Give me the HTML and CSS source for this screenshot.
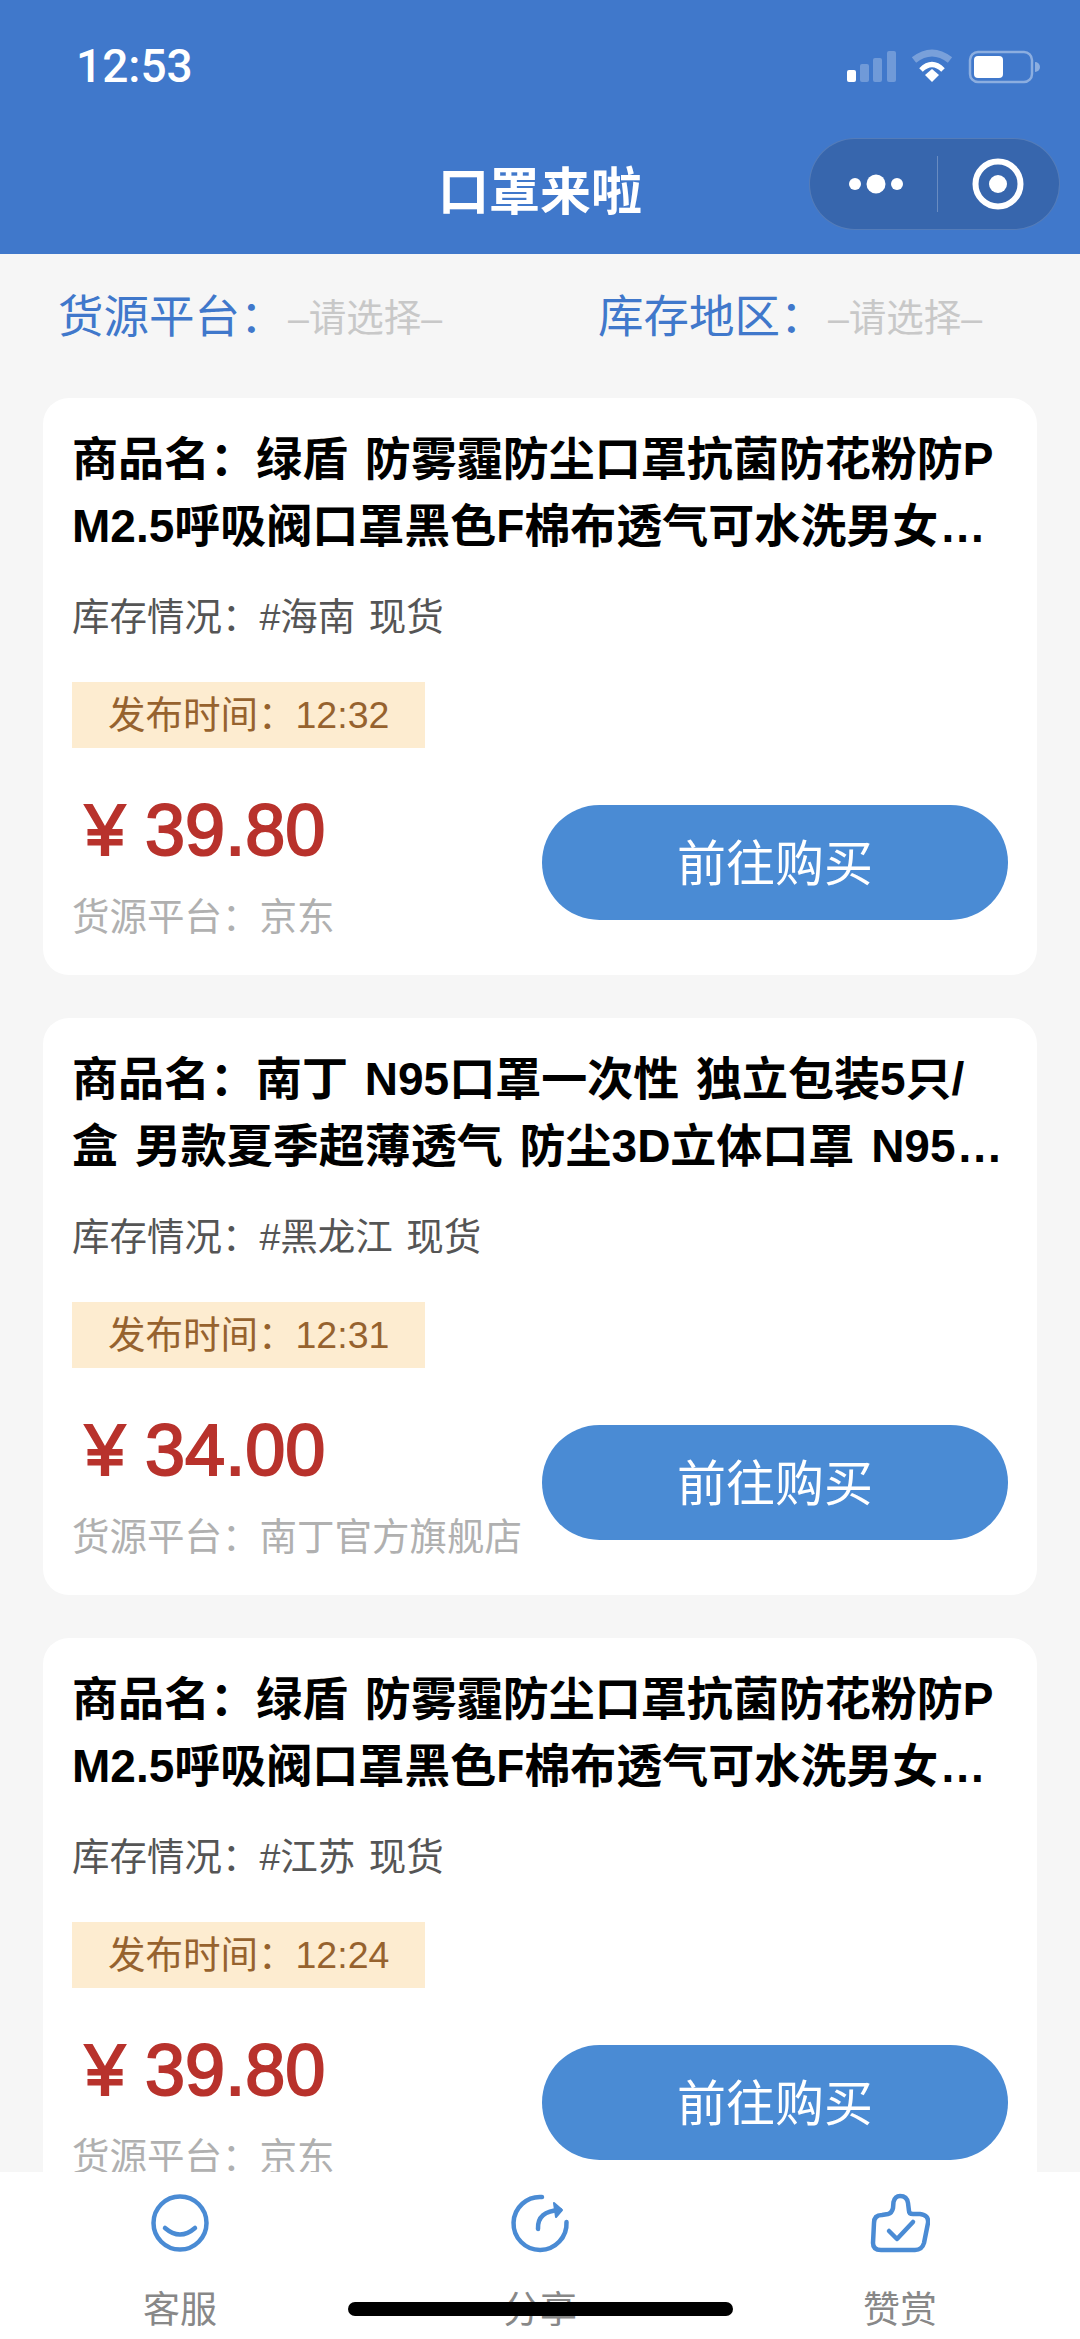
FILE: index.html
```html
<!DOCTYPE html>
<html lang="zh-CN">
<head>
    <meta charset="UTF-8">
    <meta name="viewport" content="width=device-width, initial-scale=1.0">
    <title>口罩来啦</title>
    <link rel="stylesheet" href="styles.css">
</head>
<body>
    <div class="page">
        <header class="header">
            <div class="status-bar">
                <span class="time">12:53</span>
                <svg class="status-icons" width="196" height="36" viewBox="0 0 196 36">
                    <rect x="1" y="22" width="9" height="12" rx="2" fill="#fff"/>
                    <rect x="14" y="16" width="9" height="18" rx="2" fill="#fff" opacity=".25"/>
                    <rect x="27" y="10" width="9" height="24" rx="2" fill="#fff" opacity=".25"/>
                    <rect x="41" y="3" width="9" height="31" rx="2" fill="#fff" opacity=".25"/>
                    <path d="M68 12 Q86 -2 104 12" fill="none" stroke="#fff" stroke-width="7" opacity=".3"/>
                    <path d="M75 22 Q86 11 97 22" fill="none" stroke="#fff" stroke-width="5"/>
                    <path d="M79 27 L86 21 L93 27 L86 34 Z" fill="#fff"/>
                    <rect x="124" y="4" width="62" height="30" rx="8" fill="none" stroke="#fff" stroke-width="2.5" opacity=".4"/>
                    <rect x="128" y="8" width="29" height="22" rx="4" fill="#fff"/>
                    <path d="M189 14 A5 5 0 0 1 189 24 Z" fill="#fff" opacity=".4"/>
                </svg>
            </div>
            <div class="nav-bar">
                <h1 class="nav-title">口罩来啦</h1>
                <div class="capsule">
                    <div class="capsule-btn capsule-more">
                        <svg width="56" height="24" viewBox="0 0 56 24">
                            <circle cx="7" cy="12" r="6" fill="#fff"/>
                            <circle cx="28" cy="12" r="9.5" fill="#fff"/>
                            <circle cx="49" cy="12" r="6" fill="#fff"/>
                        </svg>
                    </div>
                    <div class="capsule-line"></div>
                    <div class="capsule-btn">
                        <svg width="52" height="52" viewBox="0 0 52 52">
                            <circle cx="26" cy="26" r="22.5" fill="none" stroke="#fff" stroke-width="6"/>
                            <circle cx="26" cy="26" r="9" fill="#fff"/>
                        </svg>
                    </div>
                </div>
            </div>
        </header>

        <div class="filters">
            <div class="filter filter-left">
                <span class="filter-label">货源平台：</span>
                <span class="filter-value">–请选择–</span>
            </div>
            <div class="filter">
                <span class="filter-label">库存地区：</span>
                <span class="filter-value">–请选择–</span>
            </div>
        </div>

        <div class="list">
            <div class="card">
                <div class="card-title">商品名：绿盾 防雾霾防尘口罩抗菌防花粉防PM2.5呼吸阀口罩黑色F棉布透气可水洗男女<span class="dots">...</span></div>
                <div class="card-stock">库存情况：#海南 现货</div>
                <div class="card-tag">发布时间：12:32</div>
                <div class="card-bottom">
                    <div>
                        <div class="price">¥ 39.80</div>
                        <div class="source">货源平台：京东</div>
                    </div>
                    <button class="buy-btn">前往购买</button>
                </div>
            </div>

            <div class="card">
                <div class="card-title">商品名：南丁 N95口罩一次性 独立包装5只/盒 男款夏季超薄透气 防尘3D立体口罩 N95<span class="dots">...</span></div>
                <div class="card-stock">库存情况：#黑龙江 现货</div>
                <div class="card-tag">发布时间：12:31</div>
                <div class="card-bottom">
                    <div>
                        <div class="price">¥ 34.00</div>
                        <div class="source">货源平台：南丁官方旗舰店</div>
                    </div>
                    <button class="buy-btn">前往购买</button>
                </div>
            </div>

            <div class="card">
                <div class="card-title">商品名：绿盾 防雾霾防尘口罩抗菌防花粉防PM2.5呼吸阀口罩黑色F棉布透气可水洗男女<span class="dots">...</span></div>
                <div class="card-stock">库存情况：#江苏 现货</div>
                <div class="card-tag">发布时间：12:24</div>
                <div class="card-bottom">
                    <div>
                        <div class="price">¥ 39.80</div>
                        <div class="source">货源平台：京东</div>
                    </div>
                    <button class="buy-btn">前往购买</button>
                </div>
            </div>
        </div>

        <nav class="tabbar">
            <div class="tab">
                <svg class="tab-icon" viewBox="0 0 60 60">
                    <circle cx="30" cy="30" r="26.5"/>
                    <path d="M15 35 Q30 48 45 35"/>
                </svg>
                <span>客服</span>
            </div>
            <div class="tab">
                <svg class="tab-icon" viewBox="0 0 60 60">
                    <path d="M32 4 A26.5 26.5 0 1 0 56.5 29"/>
                    <path d="M28 36 Q27 18 50 17"/>
                    <path d="M44 10 L52 17 L46 24 Z" class="fill"/>
                </svg>
                <span>分享</span>
            </div>
            <div class="tab">
                <svg class="tab-icon" viewBox="0 0 60 60">
                    <path d="M11 57 Q3 57 3 50 L4 30 Q4 22 12 22 L18 21 Q22 20 23 15 L23.500 9 Q25 3 30 3 Q37 3 38 10 L39 18 Q39 21 43 21 L50 21 Q59 22 58 30 L54 50 Q52 57 45 57 Z"/>
                    <path d="M19 38 L27 46 L43 29"/>
                </svg>
                <span>赞赏</span>
            </div>
            <div class="home-bar"></div>
        </nav>
    </div>
</body>
</html>
```

FILE: styles.css
```css
body {
    margin: 0;
    font-family: "Liberation Sans", "Noto Sans CJK SC", sans-serif;
    background-color: #f6f6f6;
}
.page {
    height: 2339px;
    display: flex;
    flex-direction: column;
    overflow: hidden;
}

/* top blue part */
.header {
    height: 254px;
    background-color: #4078cb;
    color: white;
    flex-shrink: 0;
    box-sizing: border-box;
}
.status-bar {
    height: 132px;
    display: flex;
    justify-content: space-between;
    align-items: flex-start;
    padding: 48px 38px 0 76px;
    box-sizing: border-box;
}
.time {
    font-family: Roboto, sans-serif;
    font-size: 46px;
    font-weight: 500;
    line-height: 36px;
}
.status-icons {
    display: block;
}
.nav-bar {
    display: grid;
    grid-template-columns: 1fr auto 1fr;
    align-items: start;
    padding: 6px 20px 0;
}
.nav-title {
    grid-column: 2;
    margin: 0;
    padding-top: 9px;
    font-size: 51px;
    font-weight: 700;
    line-height: 92px;
}
.capsule {
    grid-column: 3;
    justify-self: end;
    width: 251px;
    height: 92px;
    box-sizing: border-box;
    display: flex;
    align-items: center;
    background-color: #3766ad;
    border: 1px solid rgba(255, 255, 255, 0.15);
    border-radius: 46px;
}
.capsule-btn {
    flex: 1;
    display: flex;
    justify-content: center;
    align-items: center;
}
.capsule-more {
    padding-left: 5px;
}
.capsule-btn svg {
    display: block;
}
.capsule-line {
    width: 1px;
    height: 56px;
    background-color: rgba(255, 255, 255, 0.25);
}

/* filters */
.filters {
    height: 144px;
    flex-shrink: 0;
    display: flex;
    align-items: flex-start;
    padding: 30px 0 0 58px;
    box-sizing: border-box;
}
.filter {
    display: flex;
    align-items: center;
    height: 58px;
}
.filter-left {
    width: 540px;
}
.filter-label {
    font-size: 45.5px;
    color: #4078cb;
    width: 230px;
    white-space: nowrap;
}
.filter-value {
    font-size: 37.5px;
    color: #c8c8c8;
    white-space: nowrap;
    padding-top: 3px;
}

/* cards */
.list {
    flex: 1;
    min-height: 0;
    overflow: hidden;
    padding: 0 43px;
}
.card {
    height: 577px;
    box-sizing: border-box;
    margin-bottom: 43px;
    padding: 28px 29px 0;
    background: white;
    border-radius: 26px;
}
.card-title {
    height: 134px;
    font-size: 46px;
    font-weight: 700;
    line-height: 67px;
    word-spacing: 4px;
    color: #000;
    word-break: break-all;
}
.dots {
    margin-left: 3px;
    letter-spacing: 2px;
}
.card-stock {
    margin-top: 32px;
    font-size: 37.5px;
    line-height: 50px;
    word-spacing: 3px;
    color: #555;
}
.card-tag {
    display: table;
    margin-top: 40px;
    padding: 0 36px;
    height: 66px;
    font-size: 37.5px;
    line-height: 66px;
    color: #96622e;
    background-color: #fdecd0;
}
.card-bottom {
    display: flex;
    justify-content: space-between;
    align-items: flex-start;
    margin-top: 57px;
}
.price {
    font-size: 72px;
    line-height: 50px;
    color: #b8322c;
    margin-bottom: 36px;
    padding-left: 13px;
    -webkit-text-stroke: 2px #b8322c;
}
.source {
    font-size: 37.5px;
    line-height: 52px;
    color: #b0b0b0;
}
.buy-btn {
    width: 466px;
    height: 115px;
    padding: 0 0 6px;
    border: none;
    border-radius: 58px;
    background-color: #4a8bd4;
    color: white;
    font-family: inherit;
    font-size: 49px;
}

/* bottom tabs */
.tabbar {
    height: 167px;
    flex-shrink: 0;
    display: flex;
    background: white;
    position: relative;
}
.tab {
    flex: 1;
    display: flex;
    flex-direction: column;
    align-items: center;
    padding-top: 21px;
    font-size: 37px;
    line-height: 50px;
    color: #888;
}
.tab-icon {
    width: 60px;
    height: 60px;
    fill: none;
    stroke: #4a8bd4;
    stroke-width: 4.5;
    stroke-linecap: round;
    stroke-linejoin: round;
    margin-bottom: 33px;
}
.tab-icon .fill {
    fill: #4a8bd4;
    stroke-width: 2;
}
.home-bar {
    position: absolute;
    left: 348px;
    bottom: 23px;
    width: 385px;
    height: 14px;
    border-radius: 7px;
    background-color: black;
}
```
